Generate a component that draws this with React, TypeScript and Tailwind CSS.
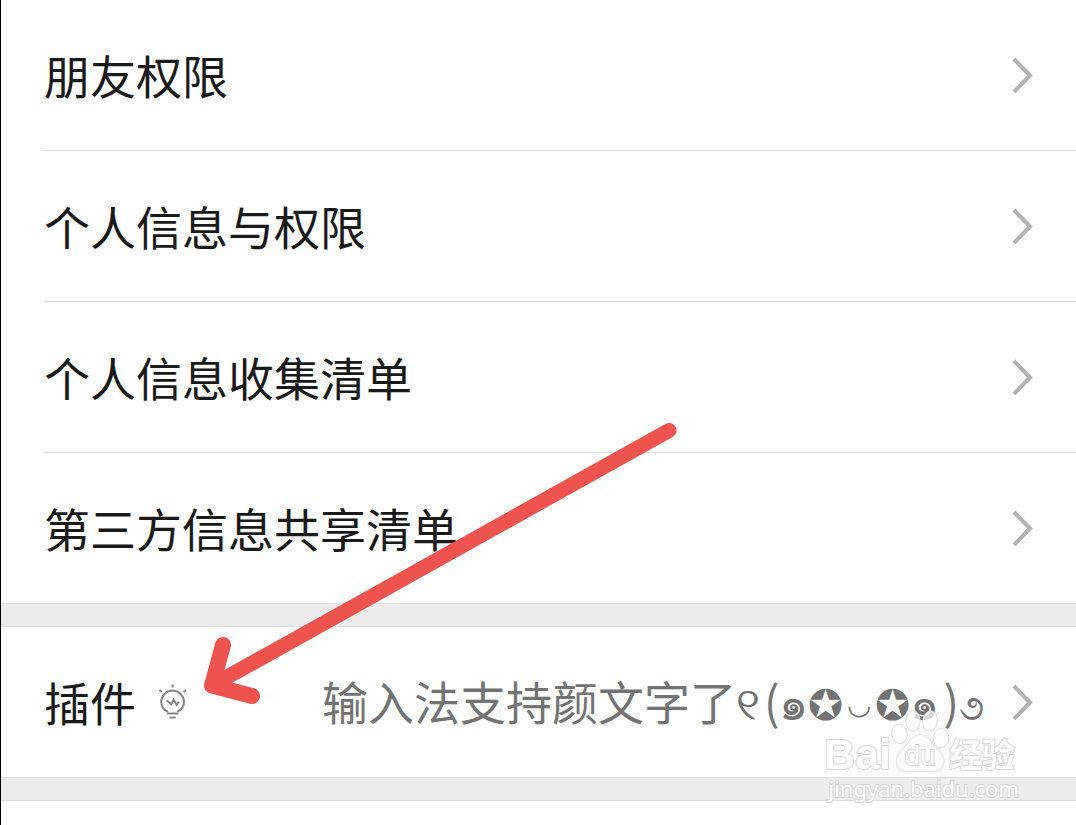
const privacyItems = ["朋友权限", "个人信息与权限", "个人信息收集清单", "第三方信息共享清单"];

function Chevron() {
  return (
    <svg viewBox="0 0 22 36" className="w-[22px] h-9 shrink-0" fill="none" stroke="#b2b2b2" strokeWidth="4" aria-hidden="true">
      <path d="M2 2 L18 18.5 L2 35" />
    </svg>
  );
}

function Bulb() {
  return (
    <svg viewBox="0 0 30 36" className="w-[30px] h-9" fill="none" stroke="#858585" strokeWidth="2" aria-hidden="true">
      <path d="M10 27.8 C5.5 25.8 3.2 22.2 3.2 18 A11.4 11.4 0 0 1 26 18 C26 22.2 23.7 25.8 19.2 27.8" />
      <path d="M8.6 16.2 L13.2 20.4 L15.6 15.6 L18.6 20.8 L20.8 17.6" />
      <path d="M9 29.6 H20.4 M11.6 33.6 H17.8 M14.6 0.5 V3.5 M1.5 6 L3.6 8 M27.8 6 L25.7 8" />
    </svg>
  );
}

function Arrow() {
  return (
    <svg viewBox="0 0 480 290" className="absolute left-[198px] top-[420px] w-[480px] h-[290px] pointer-events-none" fill="none" stroke="#ee534d" strokeWidth="16" strokeLinecap="round" strokeLinejoin="round" aria-hidden="true">
      <path d="M470 10.5 L13 265.5" strokeWidth="15" />
      <path d="M24 225 L13 265.5 L53 276" />
    </svg>
  );
}

function Paw() {
  return (
    <svg viewBox="0 0 58 64" className="w-[58px] h-16 shrink-0" fill="#ffffff" fillOpacity="0.7" stroke="#d8d8d8" strokeWidth="1.3" aria-hidden="true">
      <ellipse cx="8.5" cy="24" rx="7.5" ry="9.5" transform="rotate(-8 8.5 24)" />
      <ellipse cx="22" cy="11" rx="7" ry="10" />
      <ellipse cx="39" cy="11" rx="7" ry="10" transform="rotate(10 39 11)" />
      <ellipse cx="50" cy="28" rx="7.5" ry="9.5" transform="rotate(8 50 28)" />
      <path d="M29 25 C37 25 40 33 46 39 C53 45 54 50 52 55 C49 63 41 62 29 61 C17 62 9 63 6 55 C4 50 6 45 12 39 C18 33 21 25 29 25 Z" />
    </svg>
  );
}

function Watermark() {
  return (
    <div className="absolute right-[57px] top-[710px] flex flex-col items-end pointer-events-none text-white/90 [paint-order:stroke] [-webkit-text-stroke:2px_#d8d8d8] font-['Liberation_Sans','Noto_Sans_CJK_SC',sans-serif]">
      <div className="flex h-16 items-end pr-1">
        <span className="text-[43px] leading-10 font-bold">Bai</span>
        <div className="relative flex justify-center">
          <Paw />
          <span className="absolute bottom-0 text-[28px] leading-9">du</span>
        </div>
        <span className="text-[33px] leading-9 font-bold">经验</span>
      </div>
      <span className="text-[22px] leading-7 font-['Noto_Sans',sans-serif]">jingyan.baidu.com</span>
    </div>
  );
}

function Kaomoji() {
  return (
    <span>
      <span>୧</span>
      <span className="ml-1">(</span>
      <span>๑</span>
      <span className="text-[42px]">✪</span>
      <span className="mx-1 align-[6px] text-[28px] leading-none">◡</span>
      <span className="text-[42px]">✪</span>
      <span>๑</span>
      <span className="ml-1">)</span>
      <span className="text-[36px]">૭</span>
    </span>
  );
}

export default function App() {
  return (
    <div className="relative min-h-screen w-full overflow-hidden bg-[#fefefe] border-l border-black text-[#191919] text-[46px] leading-[60px] font-['Noto_Sans_CJK_SC',sans-serif]">
      <ul className="pl-[43px]">
        {privacyItems.map((item) => (
          <li key={item} className="border-b border-[#e0e0e0] last:border-b-0">
            <a href="#" className="flex h-[150px] items-center justify-between pr-[42px]">
              <span className="pb-0.5">{item}</span>
              <Chevron />
            </a>
          </li>
        ))}
      </ul>
      <div className="h-6 bg-[#ececec] border-y border-[#dedede]" />
      <a href="#" className="flex h-[150px] items-center pl-[43px] pr-[42px]">
        <span className="mr-[22px] pb-0.5">插件</span>
        <Bulb />
        <span className="ml-auto mr-7 whitespace-nowrap text-[#737373]">
          输入法支持颜文字了
          <Kaomoji />
        </span>
        <Chevron />
      </a>
      <div className="h-6 bg-[#ececec] border-y border-[#dedede]" />
      <Arrow />
      <Watermark />
    </div>
  );
}
